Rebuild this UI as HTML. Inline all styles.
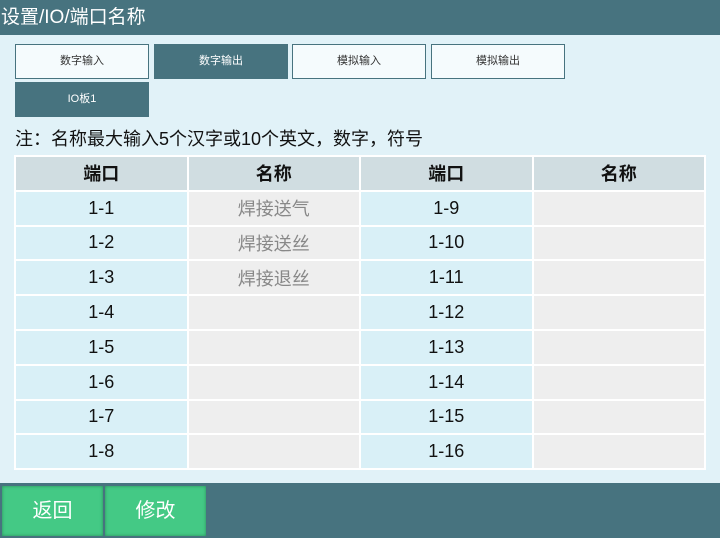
<!DOCTYPE html><html><head><meta charset="utf-8"><style>
*{margin:0;padding:0;box-sizing:border-box}
body{width:720px;height:538px;background:#e1f2f8;font-family:"Liberation Sans","Noto Sans CJK SC",sans-serif;position:relative;overflow:hidden}
.hd{position:absolute;left:0;top:0;width:720px;height:35px;background:#47737f;color:#fff;font-size:19px;line-height:36px;padding-left:1px}
.tab{position:absolute;height:35px;width:134px;border:1px solid #47737f;background:#f5fbfd;color:#333;font-size:11px;text-align:center;line-height:33px}
.tab.on{background:#47737f;color:#fff}
.note{position:absolute;left:15px;top:125px;font-size:18px;color:#111}
table{position:absolute;left:14px;top:155px;border-collapse:collapse}
td{border:2px solid #fff;height:34.8px;width:172.5px;text-align:center;font-size:18px;color:#111}
tr.h td{background:#d0dde1;font-weight:bold}
td.p{background:#d9f0f7}
td.n{background:#eeeeee;color:#888}
.ft{position:absolute;left:0;top:483px;width:720px;height:55px;background:#47737f}
.btn{position:absolute;top:486px;width:101px;height:50px;background:#44c985;color:#fff;font-size:20px;text-align:center;line-height:50px;box-shadow:inset 0 0 3px #2a8a5a}
</style></head><body>
<div class="hd">设置/IO/端口名称</div>
<div class="tab" style="left:15px;top:44px">数字输入</div>
<div class="tab on" style="left:154px;top:44px">数字输出</div>
<div class="tab" style="left:292px;top:44px">模拟输入</div>
<div class="tab" style="left:431px;top:44px">模拟输出</div>
<div class="tab on" style="left:15px;top:82px">IO板1</div>
<div class="note">注：名称最大输入5个汉字或10个英文，数字，符号</div>
<table>
<tr class="h"><td>端口</td><td>名称</td><td>端口</td><td>名称</td></tr>
<tr><td class="p">1-1</td><td class="n">焊接送气</td><td class="p">1-9</td><td class="n"></td></tr>
<tr><td class="p">1-2</td><td class="n">焊接送丝</td><td class="p">1-10</td><td class="n"></td></tr>
<tr><td class="p">1-3</td><td class="n">焊接退丝</td><td class="p">1-11</td><td class="n"></td></tr>
<tr><td class="p">1-4</td><td class="n"></td><td class="p">1-12</td><td class="n"></td></tr>
<tr><td class="p">1-5</td><td class="n"></td><td class="p">1-13</td><td class="n"></td></tr>
<tr><td class="p">1-6</td><td class="n"></td><td class="p">1-14</td><td class="n"></td></tr>
<tr><td class="p">1-7</td><td class="n"></td><td class="p">1-15</td><td class="n"></td></tr>
<tr><td class="p">1-8</td><td class="n"></td><td class="p">1-16</td><td class="n"></td></tr>
</table>
<div class="ft"></div>
<div class="btn" style="left:2px">返回</div>
<div class="btn" style="left:105px">修改</div>
</body></html>
